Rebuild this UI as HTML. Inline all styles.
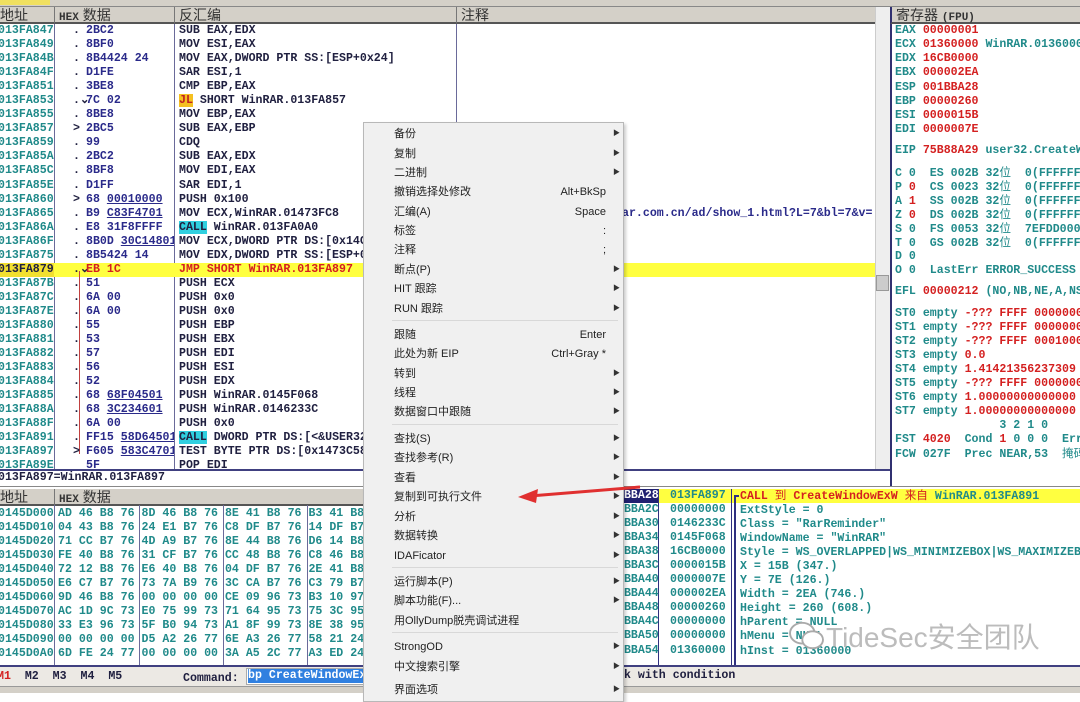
<!DOCTYPE html>
<html><head><meta charset="utf-8"><style>
*{margin:0;padding:0;box-sizing:border-box}
body{width:1080px;height:693px;overflow:hidden;position:relative;background:#fff;font-family:"Liberation Mono",monospace;font-weight:bold;font-size:11.6px;color:#202040}
.a{position:absolute}
pre{position:absolute;font:inherit;line-height:14.05px;white-space:pre;margin:0}
.cn{font-family:"Liberation Sans","Noto Sans CJK SC",sans-serif;font-weight:normal}
.hdr{position:absolute;background:#d4d0c8;border-bottom:2px solid #555;height:17px;font-family:"Liberation Sans","Noto Sans CJK SC",sans-serif;font-weight:normal;font-size:14px;line-height:16px;color:#333}
.t{color:#208a8a}.n{color:#2a2a8a}.r{color:#d42020}.k{color:#202040}
.vl{position:absolute;width:1px;background:#6a6a9a}
.menu{position:absolute;left:363px;top:122px;width:261px;height:580px;background:#f0f0f0;border:1px solid #b8b8b8;box-shadow:2px 2px 3px rgba(0,0,0,.2);font-family:"Liberation Sans","Noto Sans CJK SC",sans-serif;font-weight:normal;font-size:11px;color:#222}
.mi{position:absolute;left:30px;width:218px;height:16px;line-height:16px}
.mi .s{position:absolute;right:6px;top:0}
.mi .ar{position:absolute;right:-8px;top:0;font-size:7px;color:#333}
.sep{position:absolute;left:28px;width:226px;height:1px;background:#d8d8d8}
.rg div{position:absolute;left:0;white-space:pre;line-height:14px}
</style></head><body>
<div class="a" style="left:0;top:0;width:1080px;height:7px;background:#d4d0c8;border-bottom:1px solid #888"></div>
<div class="a" style="left:0;top:0;width:50px;height:5px;background:#f0e060"></div>
<div class="hdr" style="left:0;top:7px;width:54px;padding-left:0">地址</div>
<div class="hdr" style="left:54px;top:7px;width:120px;border-left:1px solid #777;padding-left:4px"><b style="font-family:'Liberation Mono';font-size:11px">HEX</b> 数据</div>
<div class="hdr" style="left:174px;top:7px;width:282px;border-left:1px solid #777;padding-left:4px">反汇编</div>
<div class="hdr" style="left:456px;top:7px;width:419px;border-left:1px solid #777;padding-left:4px">注释</div>
<div class="a" style="left:875px;top:7px;width:15px;height:463px;background:#eee;border-left:1px solid #ccc"></div>
<div class="a" style="left:876px;top:275px;width:13px;height:16px;background:#ccc;border:1px solid #999"></div>
<div class="vl" style="left:54px;top:24px;height:446px"></div>
<div class="vl" style="left:174px;top:24px;height:446px"></div>
<div class="vl" style="left:456px;top:24px;height:300px"></div>
<div class="a" style="left:0;top:263px;width:875px;height:14px;background:#ffff40"></div>
<div class="a" style="left:0;top:263px;width:54px;height:14px;background:#f2e030"></div>
<div class="a" style="left:79px;top:271px;width:1px;height:183px;background:#c04040"></div>
<pre class="t" style="left:-2px;top:24px">013FA847
013FA849
013FA84B
013FA84F
013FA851
013FA853
013FA855
013FA857
013FA859
013FA85A
013FA85C
013FA85E
013FA860
013FA865
013FA86A
013FA86F
013FA875
<span style="color:#202040">013FA879</span>
013FA87B
013FA87C
013FA87E
013FA880
013FA881
013FA882
013FA883
013FA884
013FA885
013FA88A
013FA88F
013FA891
013FA897
013FA89E</pre>
<pre class="k" style="left:66px;top:24px"> .
 .
 .
 .
 .
 .⌄
 .
 &gt;
 .
 .
 .
 .
 &gt;
 .
 .
 .
 .
 .⌄
 .
 .
 .
 .
 .
 .
 .
 .
 .
 .
 .
 .
 &gt;
 </pre>
<div class="a" style="left:86px;top:24px;width:88px;height:446px;overflow:hidden"><pre class="n" style="left:0;top:0">2BC2
8BF0
8B4424 24
D1FE
3BE8
7C 02
8BE8
2BC5
99
2BC2
8BF8
D1FF
68 <u>00010000</u>
B9 <u>C83F4701</u>
E8 31F8FFFF
8B0D <u>30C14801</u>
8B5424 14
<span class="r">EB 1C</span>
51
6A 00
6A 00
55
53
57
56
52
68 <u>68F04501</u>
68 <u>3C234601</u>
6A 00
FF15 <u>58D64501</u>
F605 <u>583C4701</u>
5F</pre></div>
<div class="a" style="left:176px;top:24px;width:699px;height:446px;overflow:hidden"><pre class="k" style="left:3px;top:0">SUB EAX,EDX
MOV ESI,EAX
MOV EAX,DWORD PTR SS:[ESP+0x24]
SAR ESI,1
CMP EBP,EAX
<span style="background:#f5c020;color:#c02020">JL</span> SHORT WinRAR.013FA857
MOV EBP,EAX
SUB EAX,EBP
CDQ
SUB EAX,EDX
MOV EDI,EAX
SAR EDI,1
PUSH 0x100
MOV ECX,WinRAR.01473FC8
<span style="background:#30d0e0">CALL</span> WinRAR.013FA0A0
MOV ECX,DWORD PTR DS:[0x14C130]
MOV EDX,DWORD PTR SS:[ESP+0x14]
<span class="r">JMP SHORT WinRAR.013FA897</span>
PUSH ECX
PUSH 0x0
PUSH 0x0
PUSH EBP
PUSH EBX
PUSH EDI
PUSH ESI
PUSH EDX
PUSH WinRAR.0145F068
PUSH WinRAR.0146233C
PUSH 0x0
<span style="background:#30d0e0">CALL</span> DWORD PTR DS:[&lt;&amp;USER32.CreateWindowExW&gt;]
TEST BYTE PTR DS:[0x1473C58],0x1
POP EDI</pre></div>
<pre class="n" style="left:622px;top:207px">ar.com.cn/ad/show_1.html?L=7&amp;bl=7&amp;v=</pre>
<div class="a" style="left:0;top:469px;width:890px;height:2px;background:#404080"></div>
<pre class="k" style="left:-2px;top:471px;background:#fff">013FA897=WinRAR.013FA897</pre>
<div class="a" style="left:0;top:486px;width:1080px;height:1px;background:#888"></div>
<div class="hdr" style="left:890px;top:7px;width:190px;border-left:2px solid #303070;padding-left:4px">寄存器 <b style="font-family:'Liberation Mono';font-size:11px">(FPU)</b></div>
<div class="a" style="left:890px;top:24px;width:2px;height:462px;background:#303070"></div>
<div class="rg a t" style="left:895px;top:24px;width:185px;height:460px;overflow:hidden">
<div style="top:0">EAX <span class="r">00000001</span></div>
<div style="top:14px">ECX <span class="r">01360000</span> WinRAR.01360000</div>
<div style="top:28px">EDX <span class="r">16CB0000</span></div>
<div style="top:42px">EBX <span class="r">000002EA</span></div>
<div style="top:57px">ESP <span class="r">001BBA28</span></div>
<div style="top:71px">EBP <span class="r">00000260</span></div>
<div style="top:85px">ESI <span class="r">0000015B</span></div>
<div style="top:99px">EDI <span class="r">0000007E</span></div>
<div style="top:120px">EIP <span class="r">75B88A29</span> user32.CreateWindowExW</div>
<div style="top:142px">C 0  ES 002B 32<span class="cn">位</span>  0(FFFFFFFF)</div>
<div style="top:156px">P <span class="r">0</span>  CS 0023 32<span class="cn">位</span>  0(FFFFFFFF)</div>
<div style="top:170px">A <span class="r">1</span>  SS 002B 32<span class="cn">位</span>  0(FFFFFFFF)</div>
<div style="top:184px">Z <span class="r">0</span>  DS 002B 32<span class="cn">位</span>  0(FFFFFFFF)</div>
<div style="top:198px">S 0  FS 0053 32<span class="cn">位</span>  7EFDD000(FFF)</div>
<div style="top:212px">T 0  GS 002B 32<span class="cn">位</span>  0(FFFFFFFF)</div>
<div style="top:226px">D 0</div>
<div style="top:240px">O 0  LastErr ERROR_SUCCESS</div>
<div style="top:261px">EFL <span class="r">00000212</span> (NO,NB,NE,A,NS</div>
<div style="top:283px">ST0 empty <span class="r">-??? FFFF 00000000</span></div>
<div style="top:297px">ST1 empty <span class="r">-??? FFFF 00000000</span></div>
<div style="top:311px">ST2 empty <span class="r">-??? FFFF 00010000</span></div>
<div style="top:325px">ST3 empty <span class="r">0.0</span></div>
<div style="top:339px">ST4 empty <span class="r">1.41421356237309</span></div>
<div style="top:353px">ST5 empty <span class="r">-??? FFFF 00000000</span></div>
<div style="top:367px">ST6 empty <span class="r">1.00000000000000</span></div>
<div style="top:381px">ST7 empty <span class="r">1.00000000000000</span></div>
<div style="top:395px">               3 2 1 0</div>
<div style="top:409px">FST <span class="r">4020</span>  Cond <span class="r">1</span> 0 0 0  Err</div>
<div style="top:423px">FCW 027F  Prec NEAR,53  <span class="cn">掩码</span></div>
</div>
<div class="hdr" style="left:0;top:489px;width:54px">地址</div>
<div class="hdr" style="left:54px;top:489px;width:570px;border-left:1px solid #777;padding-left:4px"><b style="font-family:'Liberation Mono';font-size:11px">HEX</b> 数据</div>
<div class="vl" style="left:54px;top:505px;height:160px"></div>
<div class="vl" style="left:139px;top:505px;height:160px"></div>
<div class="vl" style="left:223px;top:505px;height:160px"></div>
<div class="vl" style="left:307px;top:505px;height:160px"></div>
<pre class="t" style="left:-2px;top:507px">0145D000
0145D010
0145D020
0145D030
0145D040
0145D050
0145D060
0145D070
0145D080
0145D090
0145D0A0</pre>
<pre class="t" style="left:58px;top:507px">AD 46 B8 76 8D 46 B8 76 8E 41 B8 76 B3 41 B8
04 43 B8 76 24 E1 B7 76 C8 DF B7 76 14 DF B7
71 CC B7 76 4D A9 B7 76 8E 44 B8 76 D6 14 B8
FE 40 B8 76 31 CF B7 76 CC 48 B8 76 C8 46 B8
72 12 B8 76 E6 40 B8 76 04 DF B7 76 2E 41 B8
E6 C7 B7 76 73 7A B9 76 3C CA B7 76 C3 79 B7
9D 46 B8 76 00 00 00 00 CE 09 96 73 B3 10 97
AC 1D 9C 73 E0 75 99 73 71 64 95 73 75 3C 95
33 E3 96 73 5F B0 94 73 A1 8F 99 73 8E 38 95
00 00 00 00 D5 A2 26 77 6E A3 26 77 58 21 24
6D FE 24 77 00 00 00 00 3A A5 2C 77 A3 ED 24</pre>
<div class="a" style="left:624px;top:489px;width:456px;height:14px;background:#ffff40"></div>
<div class="a" style="left:624px;top:489px;width:34px;height:14px;background:#202070"></div>
<div class="vl" style="left:658px;top:489px;height:176px;background:#303080"></div>
<div class="vl" style="left:731px;top:489px;height:176px;background:#303080"></div>
<div class="vl" style="left:734px;top:496px;height:169px;background:#303080;width:2px"></div>
<div class="a" style="left:734px;top:495px;width:5px;height:2px;background:#303080"></div>
<pre class="t" style="left:617px;top:489px"><span style="color:#fff">1BBA28</span>
1BBA2C
1BBA30
1BBA34
1BBA38
1BBA3C
1BBA40
1BBA44
1BBA48
1BBA4C
1BBA50
1BBA54</pre>
<pre class="t" style="left:670px;top:489px">013FA897
00000000
0146233C
0145F068
16CB0000
0000015B
0000007E
000002EA
00000260
00000000
00000000
01360000</pre>
<pre class="t" style="left:740px;top:489px"><span class="r">CALL <span class="cn">到</span> CreateWindowExW <span class="cn">来自</span></span> <span class="t">WinRAR.013FA891</span>
ExtStyle = 0
Class = "RarReminder"
WindowName = "WinRAR"
Style = WS_OVERLAPPED|WS_MINIMIZEBOX|WS_MAXIMIZEBOX
X = 15B (347.)
Y = 7E (126.)
Width = 2EA (746.)
Height = 260 (608.)
hParent = NULL
hMenu = NULL
hInst = 01360000</pre>
<div class="a" style="left:0;top:665px;width:1080px;height:2px;background:#404080"></div>
<div class="a" style="left:0;top:667px;width:1080px;height:19px;background:#ece9e4"></div>
<pre class="k" style="left:-3px;top:670px"><span class="r">M1</span>  M2  M3  M4  M5</pre>
<pre class="k" style="left:183px;top:672px">Command:</pre>
<div class="a" style="left:246px;top:668px;width:378px;height:17px;background:#fff;border:1px solid #aaa"></div>
<pre style="left:248px;top:669px;background:#3080e0;color:#fff">bp CreateWindowExW</pre>
<pre class="k" style="left:624px;top:669px">k with condition</pre>
<div class="a" style="left:0;top:686px;width:1080px;height:7px;background:#d4d0c8;border-top:1px solid #999"></div>
<div class="a cn" style="left:788px;top:620px;font-size:28px;line-height:34px;color:rgba(160,160,160,.7)">
<svg width="38" height="32" viewBox="0 0 40 34" style="vertical-align:-5px"><ellipse cx="15" cy="14" rx="13" ry="11" fill="none" stroke="#aaa" stroke-width="2"/><ellipse cx="26" cy="21" rx="11" ry="9" fill="#fff" stroke="#aaa" stroke-width="2"/></svg>TideSec安全团队</div>
<div class="menu">
<div class="mi" style="top:3px">备份<span class="ar">▶</span></div>
<div class="mi" style="top:23px">复制<span class="ar">▶</span></div>
<div class="mi" style="top:42px">二进制<span class="ar">▶</span></div>
<div class="mi" style="top:61px">撤销选择处修改<span class="s">Alt+BkSp</span></div>
<div class="mi" style="top:81px">汇编(A)<span class="s">Space</span></div>
<div class="mi" style="top:100px">标签<span class="s">:</span></div>
<div class="mi" style="top:119px">注释<span class="s">;</span></div>
<div class="mi" style="top:139px">断点(P)<span class="ar">▶</span></div>
<div class="mi" style="top:158px">HIT 跟踪<span class="ar">▶</span></div>
<div class="mi" style="top:178px">RUN 跟踪<span class="ar">▶</span></div>
<div class="sep" style="top:197px"></div>
<div class="mi" style="top:204px">跟随<span class="s">Enter</span></div>
<div class="mi" style="top:223px">此处为新 EIP<span class="s">Ctrl+Gray *</span></div>
<div class="mi" style="top:243px">转到<span class="ar">▶</span></div>
<div class="mi" style="top:262px">线程<span class="ar">▶</span></div>
<div class="mi" style="top:281px">数据窗口中跟随<span class="ar">▶</span></div>
<div class="sep" style="top:301px"></div>
<div class="mi" style="top:308px">查找(S)<span class="ar">▶</span></div>
<div class="mi" style="top:327px">查找参考(R)<span class="ar">▶</span></div>
<div class="mi" style="top:347px">查看<span class="ar">▶</span></div>
<div class="mi" style="top:366px">复制到可执行文件<span class="ar">▶</span></div>
<div class="mi" style="top:386px">分析<span class="ar">▶</span></div>
<div class="mi" style="top:405px">数据转换<span class="ar">▶</span></div>
<div class="mi" style="top:425px">IDAFicator<span class="ar">▶</span></div>
<div class="sep" style="top:444px"></div>
<div class="mi" style="top:451px">运行脚本(P)<span class="ar">▶</span></div>
<div class="mi" style="top:470px">脚本功能(F)...<span class="ar">▶</span></div>
<div class="mi" style="top:490px">用OllyDump脱壳调试进程</div>
<div class="sep" style="top:509px"></div>
<div class="mi" style="top:516px">StrongOD<span class="ar">▶</span></div>
<div class="mi" style="top:536px">中文搜索引擎<span class="ar">▶</span></div>
<div class="mi" style="top:559px">界面选项<span class="ar">▶</span></div>
</div>
<svg class="a" style="left:0;top:0" width="1080" height="693"><line x1="530" y1="496" x2="640" y2="487" stroke="#e03030" stroke-width="3"/><polygon points="518,497 538,489 536,503" fill="#e03030"/></svg>
</body></html>
